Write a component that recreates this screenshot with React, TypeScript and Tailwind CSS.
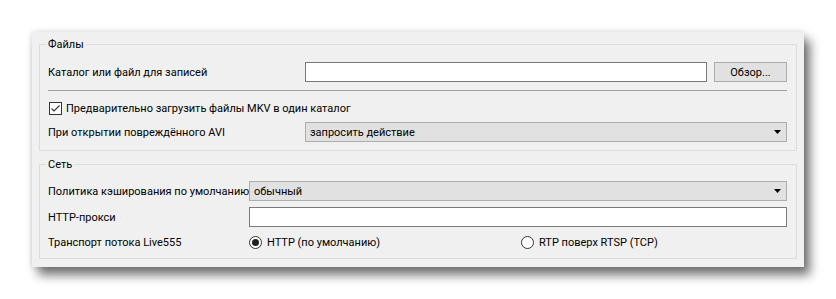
import React from "react";

const font = { fontFamily: 'Roboto, "Liberation Sans", Arial, sans-serif' };

function Arrow() {
  return (
    <svg width="7" height="4" viewBox="0 0 7 4" className="shrink-0">
      <path d="M0 0H7L3.5 4Z" fill="#000" />
    </svg>
  );
}

function Combo({ text }: { text: string }) {
  return (
    <div className="flex h-[20px] flex-1 items-center justify-between border border-[#adadad] bg-[#e1e1e1] pl-[4px] pr-[5px]">
      <span className="whitespace-nowrap leading-none">{text}</span>
      <Arrow />
    </div>
  );
}

function Group({ title, children, className }: { title: string; children: React.ReactNode; className?: string }) {
  return (
    <div className={"relative border border-[#dcdcdc] " + (className ?? "")}>
      <span className="absolute left-[6px] top-[-8px] whitespace-nowrap bg-[#f0f0f0] px-[2px] leading-[16px]">{title}</span>
      {children}
    </div>
  );
}

function Radio({ checked, label }: { checked?: boolean; label: string }) {
  return (
    <div className="flex items-center gap-[5px]">
      <div className="flex h-[13px] w-[13px] items-center justify-center rounded-full border border-[#333] bg-white">
        {checked && <div className="h-[7px] w-[7px] rounded-full bg-[#222]" />}
      </div>
      <span className="whitespace-nowrap leading-none">{label}</span>
    </div>
  );
}

export default function App() {
  return (
    <div className="h-[299px] w-[836px] bg-white pl-[32px] pt-[32px] text-[11px] text-black" style={font}>
      <div className="flex w-[772px] flex-col bg-[#f0f0f0] px-[7px] pb-[8px] pt-[12px] shadow-[6px_8px_10px_rgba(0,0,0,0.55),0_0_6px_rgba(0,0,0,0.15)]">
        <Group title="Файлы" className="pb-[8px] pl-[8px] pr-[9px] pt-[17px]">
          <div className="flex h-[20px] items-center">
            <span className="w-[257px] shrink-0 whitespace-nowrap leading-none">Каталог или файл для записей</span>
            <div className="h-[20px] flex-1 border border-[#7a7a7a] bg-white" />
            <div className="ml-[7px] flex h-[20px] w-[73px] items-center justify-center border border-[#adadad] bg-[#e1e1e1]">
              <span className="leading-none">Обзор...</span>
            </div>
          </div>
          <div className="mt-[8px] h-[1px] bg-[#a0a0a0]" />
          <div className="mt-[7px] flex h-[20px] items-center">
            <div className="ml-[1px] flex h-[13px] w-[13px] items-center justify-center border border-[#333] bg-white">
              <svg width="11" height="11" viewBox="0 0 11 11">
                <path d="M1.5 5.5L4 8L9.5 2.5" fill="none" stroke="#333" strokeWidth="1.1" />
              </svg>
            </div>
            <span className="ml-[4px] whitespace-nowrap leading-none">Предварительно загрузить файлы MKV в один каталог</span>
          </div>
          <div className="mt-[4px] flex h-[20px] items-center">
            <span className="w-[257px] shrink-0 whitespace-nowrap leading-none">При открытии повреждённого AVI</span>
            <Combo text="запросить действие" />
          </div>
        </Group>
        <Group title="Сеть" className="mt-[13px] pb-[6px] pl-[8px] pr-[9px] pt-[16px]">
          <div className="flex h-[20px] items-center">
            <span className="w-[201px] shrink-0 whitespace-nowrap leading-none">Политика кэширования по умолчанию</span>
            <Combo text="обычный" />
          </div>
          <div className="mt-[6px] flex h-[20px] items-center">
            <span className="w-[201px] shrink-0 whitespace-nowrap leading-none">HTTP-прокси</span>
            <div className="h-[20px] flex-1 border border-[#7a7a7a] bg-white" />
          </div>
          <div className="mt-[5px] flex h-[20px] items-center">
            <span className="w-[201px] shrink-0 whitespace-nowrap leading-none">Транспорт потока Live555</span>
            <div className="w-[272px] shrink-0">
              <Radio checked label="HTTP (по умолчанию)" />
            </div>
            <Radio label="RTP поверх RTSP (TCP)" />
          </div>
        </Group>
      </div>
    </div>
  );
}
